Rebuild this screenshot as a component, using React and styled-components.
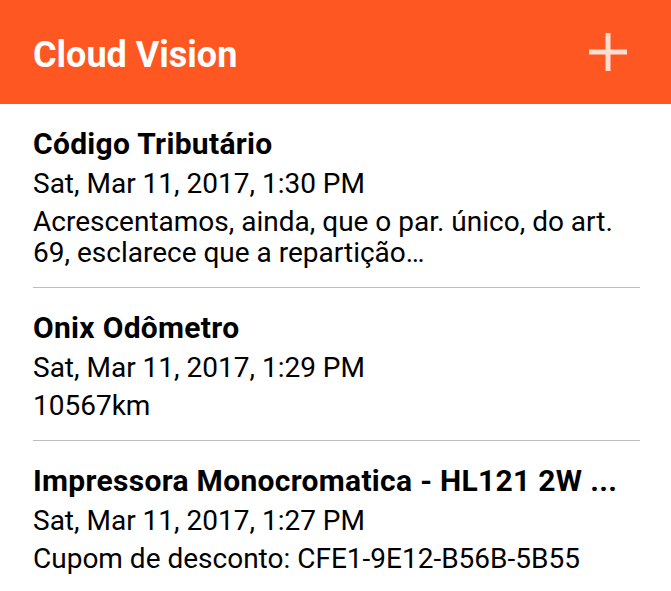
import styled, { createGlobalStyle } from 'styled-components';

const GlobalStyle = createGlobalStyle`
  html, body {
    margin: 0;
    padding: 0;
    background: #fff;
  }
  body {
    font-family: Roboto, "Noto Sans", sans-serif;
    -webkit-font-smoothing: antialiased;
  }
`

const notes = [
  {
    title: 'Código Tributário',
    date: 'Sat, Mar 11, 2017, 1:30 PM',
    body: 'Acrescentamos, ainda, que o par. único, do art. 69, esclarece que a repartição…',
  },
  {
    title: 'Onix Odômetro',
    date: 'Sat, Mar 11, 2017, 1:29 PM',
    body: '10567km',
  },
  {
    title: 'Impressora Monocromatica - HL121 2W ...',
    date: 'Sat, Mar 11, 2017, 1:27 PM',
    body: 'Cupom de desconto: CFE1-9E12-B56B-5B55',
  },
]

const App = () => {
  return (
    <>
      <GlobalStyle />
      <Page>
        <Toolbar>
          <Title>Cloud Vision</Title>
          <AddButton aria-label="add">
            <svg width="38" height="38" viewBox="0 0 38 38">
              <path d="M19 0v38M0 19h38" stroke="currentColor" strokeWidth="5" fill="none" />
            </svg>
          </AddButton>
        </Toolbar>
        <List>
          {notes.map((note, index) => (
            <Item key={index} $last={index === notes.length - 1}>
              <ItemTitle>{note.title}</ItemTitle>
              <ItemDate>{note.date}</ItemDate>
              <ItemBody>{note.body}</ItemBody>
            </Item>
          ))}
        </List>
      </Page>
    </>
  )
}

const Page = styled.div`
  width: 671px;
  min-height: 591px;
  background: #fff;
`

const Toolbar = styled.header`
  height: 104px;
  background: #ff5722;
  display: flex;
  align-items: center;
  justify-content: space-between;
  padding: 0 44px 0 33px;
  box-sizing: border-box;
`

const Title = styled.h1`
  margin: 0;
  padding-top: 5px;
  color: #fff;
  font-size: 36px;
  line-height: 42px;
  font-weight: 700;
`

const AddButton = styled.button`
  border: 0;
  padding: 0;
  background: none;
  color: rgba(255, 255, 255, 0.8);
  display: flex;
`

const List = styled.div`
  padding: 0 31px 0 33px;
`

const Item = styled.div`
  padding: 22px 0 ${p => (p.$last ? '0' : '19px')};
  border-bottom: ${p => (p.$last ? 'none' : '1px solid #bdbdbd')};
  color: #000;
`

const ItemTitle = styled.div`
  font-size: 30px;
  font-weight: 700;
  letter-spacing: 0.3px;
  line-height: 36px;
  white-space: nowrap;
`

const ItemDate = styled.div`
  font-size: 28px;
  line-height: 44px;
`

const ItemBody = styled.div`
  font-size: 28px;
  line-height: 31px;
  display: -webkit-box;
  -webkit-line-clamp: 2;
  -webkit-box-orient: vertical;
  overflow: hidden;
`

export default App
